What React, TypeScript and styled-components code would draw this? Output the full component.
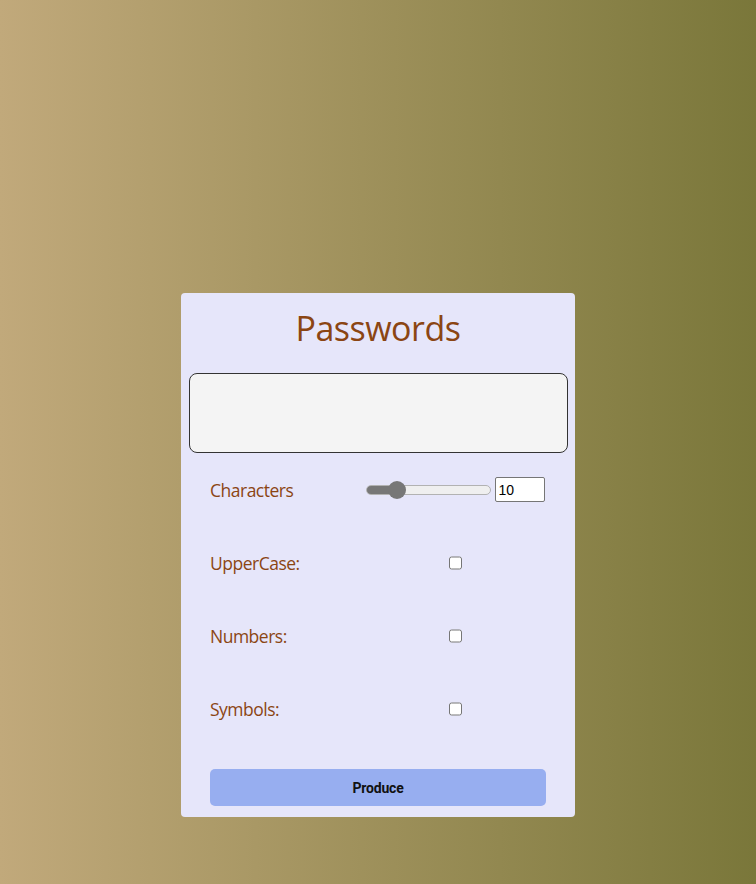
import React, { useState } from 'react';
import styled, { createGlobalStyle } from 'styled-components';

const GlobalStyle = createGlobalStyle`
  html, body {
    margin: 0;
    padding: 0;
  }
  body {
    min-height: 100vh;
    background: linear-gradient(to right, #c1a97b, #7a773a);
    font-family: "Open Sans", "DejaVu Sans", sans-serif;
  }
`;

const Page = styled.div`
  min-height: 100vh;
  display: flex;
  justify-content: center;
  align-items: flex-start;
  padding-top: 293px;
  box-sizing: border-box;
`;

const Card = styled.div`
  width: 394px;
  background: #e6e6fa;
  border-radius: 4px;
  padding: 0 0 11px;
  box-sizing: border-box;
`;

const Title = styled.h1`
  margin: 0;
  height: 80px;
  padding-bottom: 10px;
  box-sizing: border-box;
  display: flex;
  align-items: center;
  justify-content: center;
  font-size: 34px;
  font-weight: 400;
  color: #8b4513;
  letter-spacing: -0.5px;
`;

const Output = styled.div`
  margin: 0 7px 0 8px;
  height: 80px;
  background: #f4f4f4;
  border: 1px solid #333;
  border-radius: 8px;
  box-sizing: border-box;
`;

const Row = styled.div`
  height: 73px;
  margin: 0 29px;
  display: flex;
  align-items: center;
  justify-content: space-between;
`;

const Label = styled.label`
  font-size: 17.5px;
  color: #8b4513;
  letter-spacing: -0.5px;
`;

const Control = styled.div`
  width: 182px;
  display: flex;
  align-items: center;
  justify-content: center;
  gap: 4px;
`;

const Slider = styled.input`
  -webkit-appearance: none;
  appearance: none;
  width: 125px;
  height: 18px;
  margin: 0;
  background: transparent;

  &::-webkit-slider-runnable-track {
    height: 10px;
    border-radius: 5px;
    border: 1px solid #b2b2b2;
    box-sizing: border-box;
    background: var(--track);
  }

  &::-webkit-slider-thumb {
    -webkit-appearance: none;
    appearance: none;
    width: 18px;
    height: 18px;
    margin-top: -5px;
    border-radius: 50%;
    background: #777;
    border: none;
  }
`;

const NumberBox = styled.input`
  width: 50px;
  height: 25px;
  box-sizing: border-box;
  border: 1px solid #767676;
  border-radius: 2px;
  padding: 0 3px;
  font-family: "Liberation Sans", Arial, sans-serif;
  font-size: 14px;
  background: #fff;
`;

const Check = styled.input`
  width: 13px;
  height: 14px;
  margin: 0;
`;

const Produce = styled.button`
  display: block;
  width: 336px;
  height: 37px;
  margin: 24px auto 0;
  border: none;
  border-radius: 5px;
  background: #97aef0;
  font-family: "Roboto", "Liberation Sans", sans-serif;
  font-weight: 700;
  font-size: 14px;
  letter-spacing: -0.2px;
  color: #111;
  cursor: pointer;
`;

const options = ['UpperCase:', 'Numbers:', 'Symbols:'];

const MIN = 5;
const MAX = 30;

export default function App() {
  const [length, setLength] = useState(10);
  const pct = ((length - MIN) / (MAX - MIN)) * 100;
  const fill = `calc(9px + ${pct / 100} * (125px - 18px))`;
  return (
    <>
      <GlobalStyle />
      <Page>
        <Card>
          <Title>Passwords</Title>
          <Output />
          <Row>
            <Label>Characters</Label>
            <Control>
              <Slider
                type="range"
                min={MIN}
                max={MAX}
                value={length}
                style={{ '--track': `linear-gradient(to right, #777 ${fill}, #efefef ${fill})` } as React.CSSProperties}
                onChange={e => setLength(Number(e.target.value))}
              />
              <NumberBox
                type="number"
                value={length}
                onChange={e => setLength(Number(e.target.value))}
              />
            </Control>
          </Row>
          {options.map(name => (
            <Row key={name}>
              <Label>{name}</Label>
              <Control>
                <Check type="checkbox" />
              </Control>
            </Row>
          ))}
          <Produce>Produce</Produce>
        </Card>
      </Page>
    </>
  );
}
